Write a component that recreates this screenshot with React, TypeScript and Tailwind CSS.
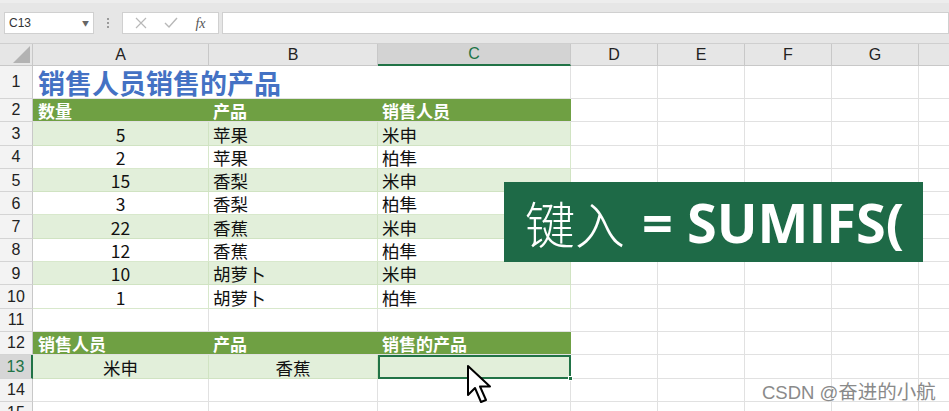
import React from 'react'

const cols = [
	{ key: 'A', w: 'w-[176px]' },
	{ key: 'B', w: 'w-[169px]' },
	{ key: 'C', w: 'w-[193px]' },
	{ key: 'D', w: 'w-[87px]' },
	{ key: 'E', w: 'w-[87px]' },
	{ key: 'F', w: 'w-[87px]' },
	{ key: 'G', w: 'w-[87px]' },
]

const data = [
	{ n: 3, a: '5', b: '苹果', c: '米申' },
	{ n: 4, a: '2', b: '苹果', c: '柏隼' },
	{ n: 5, a: '15', b: '香梨', c: '米申' },
	{ n: 6, a: '3', b: '香梨', c: '柏隼' },
	{ n: 7, a: '22', b: '香蕉', c: '米申' },
	{ n: 8, a: '12', b: '香蕉', c: '柏隼' },
	{ n: 9, a: '10', b: '胡萝卜', c: '米申' },
	{ n: 10, a: '1', b: '胡萝卜', c: '柏隼' },
]

const cjk = "font-['Noto_Sans_CJK_SC',sans-serif]"

function RowHead({ n, active }: { n: number; active?: boolean }) {
	return (
		<div
			className={`w-[33px] shrink-0 flex items-center justify-center border-b border-[#d4d4d4] text-[16px] font-['Liberation_Sans',sans-serif] ${
				active
					? 'bg-[#d6d6d6] text-[#217346] border-r-2 border-r-[#217346]'
					: 'bg-[#f3f3f3] text-[#222] border-r border-r-[#c8c8c8]'
			}`}
		>
			{n}
		</div>
	)
}

function EmptyTail() {
	return (
		<>
			<div className="w-[87px] shrink-0 border-r border-b border-[#e1e1e1]" />
			<div className="w-[87px] shrink-0 border-r border-b border-[#e1e1e1]" />
			<div className="w-[87px] shrink-0 border-r border-b border-[#e1e1e1]" />
			<div className="w-[87px] shrink-0 border-r border-b border-[#e1e1e1]" />
			<div className="flex-1 border-b border-[#e1e1e1]" />
		</>
	)
}

function GreenHeader({ n, a, b, c }: { n: number; a: string; b: string; c: string }) {
	return (
		<div className="flex h-[23.3px]">
			<RowHead n={n} />
			<div className={`w-[538px] shrink-0 flex bg-[#6fa043] text-white font-bold text-[17px] leading-[20px] ${cjk} border-b border-[#e1e1e1]`}>
				<div className="w-[176px] flex items-end pl-[5px]">{a}</div>
				<div className="w-[169px] flex items-end pl-[4px]">{b}</div>
				<div className="w-[193px] flex items-end pl-[4px]">{c}</div>
			</div>
			<EmptyTail />
		</div>
	)
}

export default function App() {
	return (
		<div className={`relative w-[949px] h-[411px] overflow-hidden bg-white ${cjk}`}>
			{/* Formula bar */}
			<div className="h-[44px] bg-[#e6e6e6] border-t-[3px] border-t-[#ededed] border-b border-b-[#cfcfcf] flex items-start pt-[9px]">
				<div className="ml-[4px] w-[90px] h-[22px] bg-white border border-[#d0d0d0] flex items-center justify-between px-[4px]">
					<span className="text-[12px] text-[#333] font-['Liberation_Sans',sans-serif]">C13</span>
					<span className="text-[7px] text-[#666]">▼</span>
				</div>
				<div className="w-[28px] h-[22px] flex flex-col items-center justify-center gap-[2px]">
					<span className="w-[2px] h-[2px] bg-[#9a9a9a]" />
					<span className="w-[2px] h-[2px] bg-[#9a9a9a]" />
					<span className="w-[2px] h-[2px] bg-[#9a9a9a]" />
				</div>
				<div className="w-[97px] h-[22px] bg-white border border-[#d0d0d0] flex items-center justify-around px-[4px] text-[#b5b5b5]">
					<svg width="12" height="12" viewBox="0 0 12 12">
						<path d="M1 1 L11 11 M11 1 L1 11" stroke="#b8b8b8" strokeWidth="1.2" />
					</svg>
					<svg width="14" height="12" viewBox="0 0 14 12">
						<path d="M1 6 L5 10 L13 1" stroke="#b8b8b8" strokeWidth="1.4" fill="none" />
					</svg>
					<span className="text-[14px] italic text-[#555] font-['Liberation_Serif',serif]">fx</span>
				</div>
				<div className="ml-[3px] flex-1 h-[22px] bg-white border border-[#d0d0d0]" />
			</div>

			{/* Column headers */}
			<div className="flex h-[22px] bg-[#e6e6e6] font-['Liberation_Sans',sans-serif] text-[16px] text-[#222]">
				<div className="w-[33px] shrink-0 relative border-r border-b border-[#c8c8c8]">
					<div className="absolute right-[2px] bottom-[2px] w-0 h-0 border-l-[17px] border-l-transparent border-b-[17px] border-b-[#b3b3b3]" />
				</div>
				{cols.map((c) => (
					<div
						key={c.key}
						className={`${c.w} shrink-0 flex items-center justify-center border-r border-[#c8c8c8] ${
							c.key === 'C' ? 'bg-[#d3d3d3] text-[#217346] border-b-2 border-b-[#217346]' : 'border-b border-b-[#c8c8c8]'
						}`}
					>
						{c.key}
					</div>
				))}
				<div className="flex-1 border-b border-[#c8c8c8]" />
			</div>

			{/* Row 1 */}
			<div className="flex h-[33px]">
				<RowHead n={1} />
				<div className="w-[345px] shrink-0 flex items-end pl-[5px] pb-[2px] border-b border-[#e1e1e1]">
					<span className="text-[27px] leading-[27px] font-bold text-[#4472c4] whitespace-nowrap">销售人员销售的产品</span>
				</div>
				<div className="w-[193px] shrink-0 border-r border-b border-[#e1e1e1]" />
				<EmptyTail />
			</div>

			<GreenHeader n={2} a="数量" b="产品" c="销售人员" />

			{data.map((r, i) => {
				const band = i % 2 === 0
				const bg = band ? 'bg-[#e2efda]' : 'bg-white'
				const line = band ? 'border-[#d0e3c2]' : 'border-[#d8e8cc]'
				return (
					<div key={r.n} className="flex h-[23.3px] text-[17.5px] leading-[21px] text-[#111]">
						<RowHead n={r.n} />
						<div className={`w-[176px] shrink-0 flex items-end justify-center border-r border-b ${bg} ${line}`}>{r.a}</div>
						<div className={`w-[169px] shrink-0 flex items-end pl-[4px] border-r border-b ${bg} ${line}`}>{r.b}</div>
						<div className={`w-[193px] shrink-0 flex items-end pl-[4px] border-r border-b ${bg} ${line}`}>{r.c}</div>
						<EmptyTail />
					</div>
				)
			})}

			{/* Row 11 */}
			<div className="flex h-[23.3px]">
				<RowHead n={11} />
				<div className="w-[176px] shrink-0 border-r border-b border-[#e1e1e1]" />
				<div className="w-[169px] shrink-0 border-r border-b border-[#e1e1e1]" />
				<div className="w-[193px] shrink-0 border-r border-b border-[#e1e1e1]" />
				<EmptyTail />
			</div>

			<GreenHeader n={12} a="销售人员" b="产品" c="销售的产品" />

			{/* Row 13 */}
			<div className="flex h-[23.3px] text-[17.5px] leading-[21px] text-[#111]">
				<RowHead n={13} active />
				<div className="w-[176px] shrink-0 flex items-end justify-center bg-[#e2efda] border-r border-b border-[#d0e3c2]">米申</div>
				<div className="w-[169px] shrink-0 flex items-end justify-center bg-[#e2efda] border-r border-b border-[#d0e3c2]">香蕉</div>
				<div className="w-[193px] shrink-0 relative bg-[#e2efda] border-2 border-[#217346]">
					<div className="absolute right-[-4px] bottom-[-4px] w-[5px] h-[5px] bg-[#217346] border border-white" />
				</div>
				<EmptyTail />
			</div>

			{/* Rows 14-15 */}
			{[14, 15].map((n) => (
				<div key={n} className="flex h-[23.3px]">
					<RowHead n={n} />
					<div className="w-[176px] shrink-0 border-r border-b border-[#e1e1e1]" />
					<div className="w-[169px] shrink-0 border-r border-b border-[#e1e1e1]" />
					<div className="w-[193px] shrink-0 border-r border-b border-[#e1e1e1]" />
					<EmptyTail />
				</div>
			))}

			{/* Caption overlay */}
			<div className="absolute left-[504px] top-[182px] w-[419px] h-[80px] bg-[#1e6a47] flex items-center pl-[21px] text-white whitespace-nowrap">
				<span className="text-[50px] leading-none font-light">键入</span>
				<span className="text-[54px] leading-none font-bold font-['Open_Sans',sans-serif] ml-[17px]">= SUMIFS(</span>
			</div>

			{/* Mouse pointer */}
			<svg className="absolute left-[466px] top-[364px]" width="26" height="40" viewBox="0 0 26 40">
				<path d="M2 2 L2 31 L9 24 L15 38 L20 36 L14 22.5 L24 22.5 Z" fill="white" stroke="black" strokeWidth="2" strokeLinejoin="round" />
			</svg>

			{/* Watermark */}
			<div className="absolute left-[762px] top-[381px] leading-none text-[#8a8a8a] whitespace-nowrap">
				<span className="text-[18.5px] font-['Liberation_Sans',sans-serif]">CSDN @</span>
				<span className="text-[19.5px]">奋进的小航</span>
			</div>
		</div>
	)
}
